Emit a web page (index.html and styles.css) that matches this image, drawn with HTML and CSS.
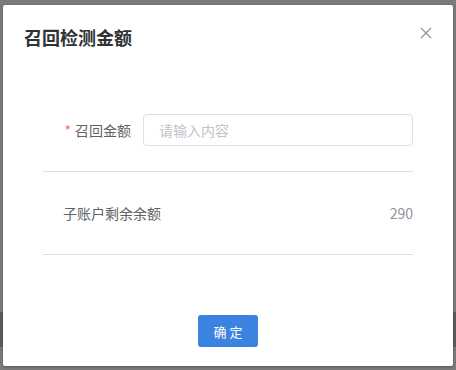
FILE: index.html
```html
<!DOCTYPE html>
<html lang="zh-CN">
<head>
  <meta charset="UTF-8" />
  <title>召回检测金额</title>
  <link rel="stylesheet" href="styles.css">
</head>
<body>
  <div class="dialog">
    <div class="dialog-header">
      <span class="dialog-title">召回检测金额</span>
      <button class="dialog-close" aria-label="关闭">
        <svg width="12" height="12" viewBox="0 0 12 12"><path d="M1 1L11 11M11 1L1 11" stroke="#909399" stroke-width="1.2" fill="none"/></svg>
      </button>
    </div>

    <div class="dialog-body">
      <div class="form-item">
        <label class="form-label"><span class="required">*</span>召回金额</label>
        <input class="form-input" type="text" placeholder="请输入内容">
      </div>

      <div class="balance-row">
        <span>子账户剩余余额</span>
        <span class="balance-value">290</span>
      </div>
    </div>

    <div class="dialog-footer">
      <button class="btn-primary">确 定</button>
    </div>
  </div>
</body>
</html>
```

FILE: styles.css
```css
body {
  margin: 0;
  height: 370px;
  overflow: hidden;
  font-family: "Noto Sans CJK SC", "Liberation Sans", sans-serif;
  background:
    linear-gradient(to bottom,
      #7b7b7d 0, #7b7b7d 312px,
      #5d5d5f 312px, #5d5d5f 347px,
      #7b7b7d 347px);
}

.dialog {
  position: relative;
  box-sizing: border-box;
  width: 450px;
  height: 361px;
  margin: 5px 0 0 3px;
  background: #fff;
  border-radius: 2px;
  box-shadow: 0 1px 3px rgba(0, 0, 0, 0.3);
  display: flex;
  flex-direction: column;
}

.dialog-header {
  padding: 20px 20px 10px 21px;
}

.dialog-title {
  display: block;
  font-size: 18px;
  line-height: 24px;
  font-weight: bold;
  color: #303133;
}

.dialog-close {
  position: absolute;
  top: 22px;
  right: 21px;
  padding: 0;
  border: none;
  background: none;
  cursor: pointer;
}

.dialog-body {
  padding: 55px 40px 0;
  flex: 1;
}

.form-item {
  display: flex;
  align-items: center;
  padding-bottom: 25px;
  border-bottom: 1px solid #dcdfe6;
}

.form-label {
  width: 100px;
  box-sizing: border-box;
  padding-right: 12px;
  text-align: right;
  font-size: 14px;
  color: #606266;
}

.required {
  color: #f56c6c;
  margin-right: 4px;
}

.form-input {
  flex: 1;
  height: 32px;
  box-sizing: border-box;
  border: 1px solid #dcdfe6;
  border-radius: 4px;
  padding: 0 15px;
  font-family: inherit;
  font-size: 14px;
  color: #606266;
  outline: none;
}

.form-input::placeholder {
  color: #c0c4cc;
}

.balance-row {
  display: flex;
  justify-content: space-between;
  align-items: center;
  height: 82px;
  padding-left: 20px;
  border-bottom: 1px solid #dcdfe6;
  font-size: 14px;
  color: #606266;
}

.balance-value {
  color: #909399;
}

.dialog-footer {
  display: flex;
  justify-content: center;
  padding-bottom: 19px;
}

.btn-primary {
  width: 60px;
  height: 32px;
  border: none;
  border-radius: 3px;
  background: #3c82e0;
  color: #fff;
  font-family: inherit;
  font-size: 13px;
  cursor: pointer;
}
```
